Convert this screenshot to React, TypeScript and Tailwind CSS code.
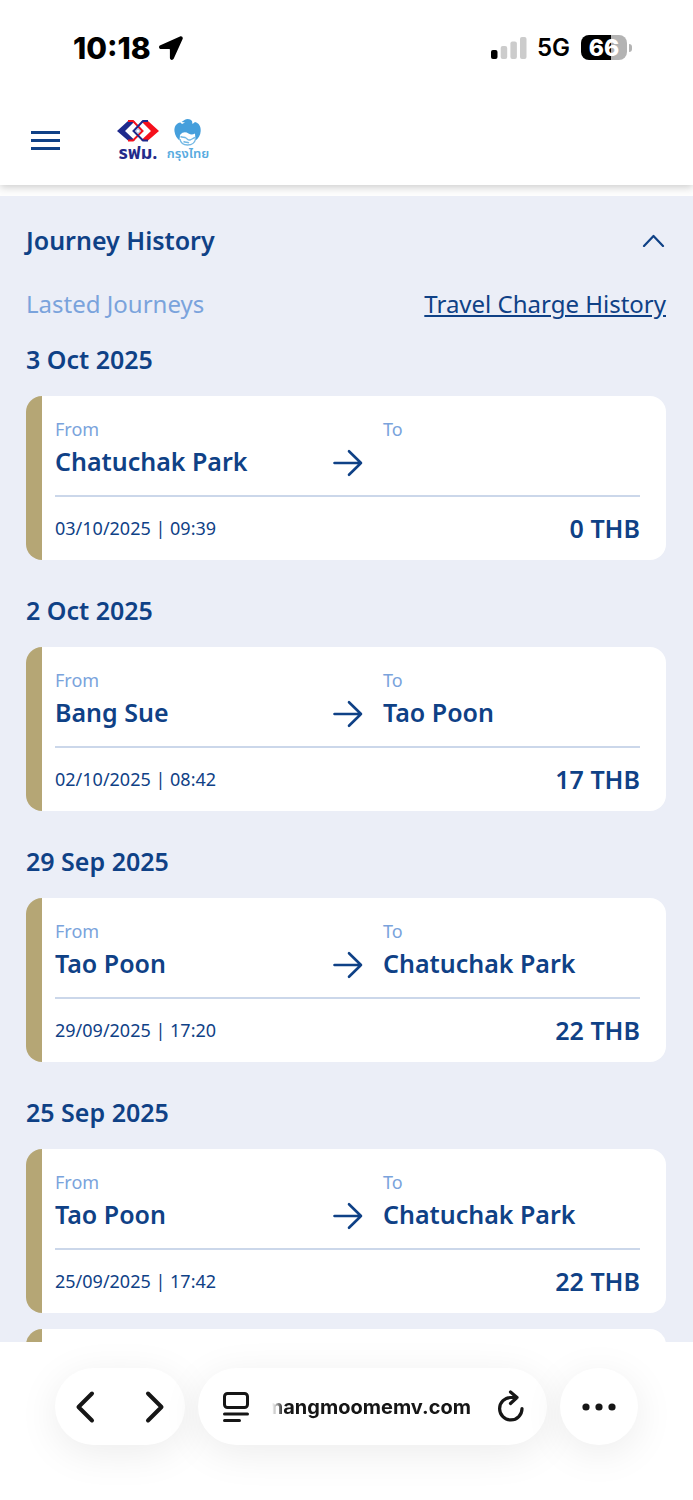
import React from "react";

type Journey = {
    from: string;
    to?: string;
    time: string;
    fare: number;
};

type JourneyDay = {
    date: string;
    journeys: Journey[];
};

const days: JourneyDay[] = [
    {
        date: "3 Oct 2025",
        journeys: [{ from: "Chatuchak Park", time: "03/10/2025 | 09:39", fare: 0 }],
    },
    {
        date: "2 Oct 2025",
        journeys: [
            { from: "Bang Sue", to: "Tao Poon", time: "02/10/2025 | 08:42", fare: 17 },
        ],
    },
    {
        date: "29 Sep 2025",
        journeys: [
            { from: "Tao Poon", to: "Chatuchak Park", time: "29/09/2025 | 17:20", fare: 22 },
        ],
    },
    {
        date: "25 Sep 2025",
        journeys: [
            { from: "Tao Poon", to: "Chatuchak Park", time: "25/09/2025 | 17:42", fare: 22 },
        ],
    },
];

const StatusBar: React.FC = () => (
    <div className="flex h-[95px] items-center justify-between pl-[73px] pr-[61px] font-['Inter',sans-serif] text-black">
        <div className="flex items-center gap-2">
            <span className="text-[30px] font-extrabold leading-8">10:18</span>
            <svg width="24" height="24" viewBox="0 0 24 24" aria-hidden="true">
                <path
                    d="M1.4 9.300 21 .5c1.800-.7 3.300.8 2.600 2.600l-8.800 19.500c-1 2.100-3.900 1.600-3.900-.8v-8.200c0-.4-.2-.6-.6-.6H2.200C-.2 13-.8 10.300 1.400 9.300z"
                    fill="#000"
                />
            </svg>
        </div>
        <div className="flex items-center">
            <svg width="36" height="24" viewBox="0 0 36 24" role="img" aria-label="Signal">
                <rect x="0" y="14" width="6.500" height="9" rx="2" fill="#000" />
                <rect x="9.700" y="10" width="6.500" height="13" rx="2" fill="#ccc" />
                <rect x="19.400" y="5.500" width="6.500" height="17.500" rx="2" fill="#ccc" />
                <rect x="29" y="1" width="6.500" height="22" rx="2" fill="#ccc" />
            </svg>
            <span className="ml-2.5 text-2xl font-semibold leading-8">5G</span>
            <div className="ml-[11px] flex items-center">
                <div className="flex h-[25px] w-[46px] items-center justify-center rounded-lg bg-[linear-gradient(90deg,#000_66%,#b3b3b3_66%)] text-[23px] font-extrabold leading-6 text-white">
                    66
                </div>
                <div className="ml-0.5 h-2 w-[3px] rounded-r-full bg-[#b3b3b3]" />
            </div>
        </div>
    </div>
);

const MrtaLogo: React.FC = () => (
    <svg width="44" height="44" viewBox="0 0 44 44" className="overflow-visible" role="img" aria-label="รฟม.">
        <path d="M12 3h7l-10 10 10 9.500h-7L1 13z" fill="#1f2a8c" />
        <path d="M32 3h-7l10 10-10 9.500h7L43 13z" fill="#f5101c" />
        <g fill="none" strokeWidth="2">
            <path d="M12 3h5l9.500 10-9.500 9.500h-5" stroke="#f5101c" />
            <path d="M32 3h-5L17.500 13l9.500 9.500h5" stroke="#1f2a8c" />
            <path d="M22 10.500 24.500 13 22 15.500 19.500 13z" stroke="#8f9ad0" strokeWidth="1" />
        </g>
        <text
            x="22"
            y="41"
            textAnchor="middle"
            className="fill-[#232a8a] font-['Noto_Sans_Thai','Noto_Sans',sans-serif] text-[18px] font-bold"
        >
            รฟม.
        </text>
    </svg>
);

const KrungthaiLogo: React.FC = () => (
    <svg width="42" height="44" viewBox="0 0 42 44" className="overflow-visible" role="img" aria-label="กรุงไทย">
        <path
            d="M15 6 13.500 4.500C9 5 7 9 7.500 13.500 8 17.500 10 20.500 12.500 22.500L13 17c3-3.500 6-3 8.500-1.500s4.500 1 6.500 0l.5 7C31.500 20.500 33.500 17 33.700 13 34 8.500 32 5 28 4L25.500 6l-.5-3C23.500.5 19.500.3 17.500 2L14.500 4l3.500.5z"
            fill="#459fdc"
        />
        <path
            d="M13.500 18.500c2 1 4 .5 5.500 1.500s2 2.500 4 2 3-2 5-2.500M13 21c.5 3.500 3.500 6 7.700 6s7.300-2.500 7.800-6M16.500 23.500c2 1 4 .5 5.500 1.500"
            fill="none"
            stroke="#73b8e4"
            strokeWidth="1.400"
        />
        <text
            x="21"
            y="40"
            textAnchor="middle"
            className="fill-[#58abdf] font-['Noto_Sans_Thai','Noto_Sans',sans-serif] text-[13px] font-semibold"
        >
            กรุงไทย
        </text>
    </svg>
);

const JourneyCard: React.FC<{ journey: Journey }> = ({ journey }) => (
    <article className="overflow-hidden rounded-2xl border-l-[16px] border-[#b5a675] bg-white pl-[13px] pr-[26px]">
        <div className="grid grid-cols-[278fr_50fr_257fr] items-end border-b-2 border-[#cbd7ea] pb-3.5 pt-[21px]">
            <div>
                <p className="text-lg leading-6 text-[#7aa3dc]">From</p>
                <p className="h-10 text-[25px] font-semibold leading-10">{journey.from}</p>
            </div>
            <svg
                width="30"
                height="40"
                viewBox="0 0 30 40"
                fill="none"
                stroke="currentColor"
                strokeWidth="2.600"
                strokeLinecap="round"
                strokeLinejoin="round"
                aria-hidden="true"
            >
                <path d="M1.500 22H28M16 10.200 28 22 16 33.800" />
            </svg>
            <div>
                <p className="text-lg leading-6 text-[#7aa3dc]">To</p>
                <p className="h-10 text-[25px] font-semibold leading-10">{journey.to}</p>
            </div>
        </div>
        <div className="flex items-center justify-between pb-3 pt-[11px]">
            <time className="text-lg">{journey.time}</time>
            <span className="text-[25px] font-semibold leading-10">{journey.fare} THB</span>
        </div>
    </article>
);

const BrowserBar: React.FC = () => (
    <footer className="z-10 h-[158px] shrink-0 px-[55px] pt-[26px] font-['Inter',sans-serif] text-[#161616]">
        <div className="flex h-[77px] gap-[13px]">
            <nav className="flex w-[130px] shrink-0 items-center justify-between rounded-full bg-white px-5 shadow-[0_8px_40px_rgba(0,0,0,0.08)]">
                <button type="button" title="Back">
                    <svg width="22" height="34" viewBox="0 0 22 34" fill="none" stroke="currentColor" strokeWidth="4" strokeLinecap="round" strokeLinejoin="round">
                        <path d="M17 3.500 3.500 17 17 30.500" />
                    </svg>
                </button>
                <button type="button" title="Forward">
                    <svg width="22" height="34" viewBox="0 0 22 34" fill="none" stroke="currentColor" strokeWidth="4" strokeLinecap="round" strokeLinejoin="round">
                        <path d="M5 3.500 18.500 17 5 30.500" />
                    </svg>
                </button>
            </nav>
            <div className="flex min-w-0 flex-1 items-center rounded-full bg-white pl-6 pr-[22px] shadow-[0_8px_40px_rgba(0,0,0,0.08)]">
                <button type="button" title="Page menu" className="shrink-0">
                    <svg width="28" height="32" viewBox="0 0 28 32" fill="none" stroke="currentColor" strokeWidth="3" strokeLinecap="round">
                        <rect x="2.500" y="2.500" width="23" height="14" rx="3" />
                        <path d="M2.500 23h23M2.500 29.500h15" />
                    </svg>
                </button>
                <button
                    type="button"
                    title="Address"
                    className="ml-[22px] flex min-w-0 flex-1 justify-end overflow-hidden text-[20px] font-bold leading-8 mask-[linear-gradient(90deg,transparent,#000_12px)]"
                >
                    mangmoomemv.com
                </button>
                <button type="button" title="Reload" className="ml-6 shrink-0">
                    <svg width="30" height="34" viewBox="0 0 30 34" fill="none" stroke="currentColor" strokeWidth="3.200" strokeLinecap="round" strokeLinejoin="round">
                        <path d="M27 18.500A11.200 11.200 0 1 1 16 7.500h6M15.500 2 22 7.500 15.500 13.500" />
                    </svg>
                </button>
            </div>
            <button
                type="button"
                title="More"
                className="flex w-[78px] shrink-0 items-center justify-center rounded-full bg-white shadow-[0_8px_40px_rgba(0,0,0,0.08)]"
            >
                <svg width="34" height="8" viewBox="0 0 34 8" fill="currentColor">
                    <circle cx="4" cy="4" r="3.600" />
                    <circle cx="17" cy="4" r="3.600" />
                    <circle cx="30" cy="4" r="3.600" />
                </svg>
            </button>
        </div>
    </footer>
);

const App: React.FC = () => {
    return (
        <div className="flex h-screen flex-col bg-white font-['Noto_Sans',sans-serif] text-[#0f4186]">
            <header className="z-10 shrink-0 bg-white shadow-[0_2px_8px_rgba(0,0,0,0.2)]">
                <StatusBar />
                <div className="flex h-[90px] items-center pl-[31px]">
                    <button type="button" title="Menu" className="flex w-[29px] flex-col gap-[5px]">
                        <span className="h-[3px] w-full bg-[#0f4186]" />
                        <span className="h-[3px] w-full bg-[#0f4186]" />
                        <span className="h-[3px] w-full bg-[#0f4186]" />
                    </button>
                    <a href="#" className="ml-14 flex gap-[7px]">
                        <MrtaLogo />
                        <KrungthaiLogo />
                    </a>
                </div>
            </header>
            <main className="min-h-0 flex-1 overflow-hidden bg-[#fdfdfd] pt-[11px]">
                <section className="bg-[#ebeef7] pl-[26px] pr-[27px] pt-6">
                    <button type="button" className="flex w-full items-center justify-between">
                        <h1 className="text-[25px] font-semibold leading-10">Journey History</h1>
                        <svg width="24" height="14" viewBox="0 0 24 14" fill="none" stroke="currentColor" strokeWidth="2.200" strokeLinecap="round" strokeLinejoin="round" aria-hidden="true">
                            <path d="M2 13 11.500 3 21 13" />
                        </svg>
                    </button>
                    <div className="mt-6 flex justify-between text-2xl leading-10">
                        <p className="text-[#7aa3dc]">Lasted Journeys</p>
                        <a href="#" className="underline">
                            Travel Charge History
                        </a>
                    </div>
                    <div className="mt-[15px] flex flex-col gap-[30px]">
                        {days.map((day) => (
                            <section key={day.date}>
                                <h2 className="text-[25px] font-semibold leading-10">{day.date}</h2>
                                <div className="mt-[17px] flex flex-col gap-4">
                                    {day.journeys.map((journey, index) => (
                                        <JourneyCard key={index} journey={journey} />
                                    ))}
                                </div>
                            </section>
                        ))}
                    </div>
                    <div className="mt-4 h-40 rounded-2xl border-l-[16px] border-[#b5a675] bg-white" />
                </section>
            </main>
            <BrowserBar />
        </div>
    );
};

export default App;
